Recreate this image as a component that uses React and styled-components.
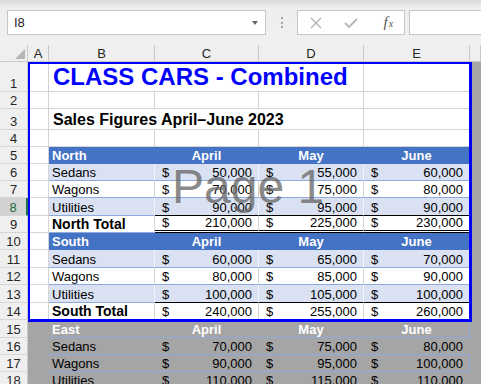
import React from "react";
import styled, { createGlobalStyle } from "styled-components";

const COLS = "28px 21px 106px 104px 105px 106px 1fr";
const GRID = "#d4d4d4";
const TBL = "#8ea9db";
const HEAD = "#4472c4";
const BAND = "#d9e1f2";
const OUT = "#a5a5a5";
const PRINT = "#0000ff";
const HDR = "#efefef";
const HDR_LINE = "#cacaca";

const GlobalStyle = createGlobalStyle`
  *, *::before, *::after { box-sizing: border-box; }
  html, body { margin: 0; padding: 0; background: #f0f0f0; overflow: hidden; }
  body { font-family: "Liberation Sans", Arial, sans-serif; }
`;

const Window = styled.div`
  width: 481px;
  height: 384px;
  overflow: hidden;
  display: flex;
  flex-direction: column;
  background: #f0f0f0;
`;

/* ---------- formula bar ---------- */
const FormulaBar = styled.div`
  flex: none;
  height: 45px;
  display: flex;
  align-items: flex-start;
  padding: 10px 0 0 7px;
  background: linear-gradient(#d9d9d9, #eeeeee 7px, #f0f0f0);
`;

const NameBox = styled.div`
  flex: none;
  width: 259px;
  height: 25px;
  background: #fff;
  border: 1px solid #c6c6c6;
  display: flex;
  align-items: center;
  justify-content: space-between;
  padding: 0 7px 0 6px;
  font-size: 13px;
  color: #222;
`;

const DropArrow = styled.span`
  width: 0;
  height: 0;
  border-left: 3px solid transparent;
  border-right: 3px solid transparent;
  border-top: 4px solid #666;
`;

const Grip = styled.div`
  flex: none;
  width: 31px;
  height: 25px;
  display: flex;
  flex-direction: column;
  align-items: center;
  justify-content: center;
  gap: 2.5px;
`;

const GripDot = styled.i`
  display: block;
  width: 2px;
  height: 2px;
  background: #a6a6a6;
`;

const FxBox = styled.div`
  flex: none;
  width: 108px;
  height: 25px;
  background: #fff;
  border: 1px solid #c6c6c6;
  display: grid;
  grid-template-columns: repeat(3, 1fr);
  align-items: center;
  justify-items: center;
`;

const FxLabel = styled.span`
  font-family: "Liberation Serif", "DejaVu Serif", serif;
  font-style: italic;
  font-size: 15px;
  color: #555;
  line-height: 1;
  padding-left: 4px;
  & > small {
    font-size: 10px;
    margin-left: 1px;
  }
`;

const FormulaInput = styled.div`
  flex: 1;
  margin-left: 4px;
  height: 25px;
  background: #fff;
  border: 1px solid #c6c6c6;
  border-right: none;
`;

/* ---------- column header ---------- */
const HeaderRow = styled.div`
  flex: none;
  display: grid;
  grid-template-columns: ${COLS};
  height: 17px;
`;

const Corner = styled.div`
  background: ${HDR};
  border-right: 1px solid ${HDR_LINE};
  border-bottom: 1px solid ${HDR_LINE};
  display: flex;
  align-items: flex-end;
  justify-content: flex-end;
  padding: 0 2px 2px 0;
`;

const ColHead = styled.div`
  background: ${HDR};
  border-right: 1px solid ${HDR_LINE};
  border-bottom: 1px solid ${HDR_LINE};
  display: flex;
  align-items: center;
  justify-content: center;
  font-size: 13px;
  color: #262626;
`;

/* ---------- sheet ---------- */
const SheetBody = styled.div`
  position: relative;
  flex: 1;
  overflow: hidden;
`;

const Row = styled.div`
  display: grid;
  grid-template-columns: ${COLS};
  height: ${(p) => p.$h}px;
`;

const RowNum = styled.div`
  display: flex;
  align-items: flex-end;
  justify-content: center;
  font-size: 13px;
  line-height: 15px;
  color: ${(p) => (p.$sel ? "#1b6b3c" : "#262626")};
  background: ${(p) => (p.$sel ? "#d2d2d2" : HDR)};
  border-bottom: 1px solid #d6d6d6;
  border-right: ${(p) => (p.$sel ? "2px solid #217346" : `1px solid ${HDR_LINE}`)};
`;

const Cell = styled.div`
  display: flex;
  align-items: flex-end;
  min-width: 0;
  white-space: nowrap;
  padding: 0 0 0 3px;
  font-size: 13px;
  line-height: 14px;
  color: #000;
  background: #fff;
  border-right: 1px solid ${GRID};
  border-bottom: 1px solid ${GRID};
`;

const OutCell = styled(Cell)`
  background: ${OUT};
  border-right-color: ${OUT};
  border-bottom-color: ${OUT};
`;

const TitleCell = styled(Cell)`
  grid-column: span 3;
  padding-left: 4px;
  font-size: 24px;
  line-height: 28px;
  font-weight: 700;
  color: #0000ff;
`;

const SubtitleCell = styled(Cell)`
  grid-column: span 3;
  padding-left: 4px;
  font-size: 16px;
  line-height: 18px;
  font-weight: 700;
`;

const toneBg = { head: HEAD, band: BAND, white: "#fff", total: "#fff", out: OUT };
const toneV = { head: HEAD, band: "#f1f4fa", white: GRID, total: GRID, out: OUT };

const TCell = styled(Cell)`
  background: ${(p) => toneBg[p.$tone]};
  border-right-color: ${(p) => (p.$edge ? TBL : toneV[p.$tone])};
  border-bottom: ${(p) =>
    p.$rule === "double"
      ? "3px double #000"
      : `1px solid ${p.$rule === "black" ? "#000" : p.$tone === "head" ? HEAD : TBL}`};
  color: ${(p) => (p.$light ? "#fff" : "#000")};
  font-weight: ${(p) => (p.$bold ? 700 : 400)};
  font-size: ${(p) => (p.$big ? 14 : 13)}px;
  line-height: ${(p) => (p.$big ? 15 : 14)}px;
  justify-content: ${(p) => (p.$center ? "center" : p.$spread ? "space-between" : "flex-start")};
  padding: ${(p) => (p.$spread ? "0 6px 0 7px" : p.$center ? "0" : "0 0 0 3px")};
`;

const PrintArea = styled.div`
  position: absolute;
  left: 28px;
  top: 0;
  width: 444px;
  height: 260px;
  border-style: solid;
  border-color: ${PRINT};
  border-width: 2px 3px 3px 2px;
  pointer-events: none;
`;

const Watermark = styled.div`
  position: absolute;
  left: 172px;
  top: 101px;
  font-size: 48px;
  line-height: 48px;
  color: rgba(100, 100, 100, 0.75);
  white-space: nowrap;
  pointer-events: none;
`;

/* ---------- data ---------- */
const HEIGHTS = {
  1: 30, 2: 17, 3: 21, 4: 17, 5: 17, 6: 17, 7: 17, 8: 18, 9: 17,
  10: 17, 11: 18, 12: 17, 13: 18, 14: 17, 15: 18, 16: 17, 17: 17, 18: 17,
};
const MONTHS = ["April", "May", "June"];
const SECTIONS = [
  {
    start: 5,
    name: "North",
    items: [
      ["Sedans", 50000, 55000, 60000],
      ["Wagons", 70000, 75000, 80000],
      ["Utilities", 90000, 95000, 90000],
    ],
    total: [210000, 225000, 230000],
  },
  {
    start: 10,
    name: "South",
    items: [
      ["Sedans", 60000, 65000, 70000],
      ["Wagons", 80000, 85000, 90000],
      ["Utilities", 100000, 105000, 100000],
    ],
    total: [240000, 255000, 260000],
    lastTotal: true,
  },
  {
    start: 15,
    name: "East",
    out: true,
    items: [
      ["Sedans", 70000, 75000, 80000],
      ["Wagons", 90000, 95000, 100000],
      ["Utilities", 110000, 115000, 110000],
    ],
  },
];

const fmt = (v) => String(v).replace(/\B(?=(\d{3})+(?!\d))/g, ",");

function SheetRow({ n, out, children }) {
  return (
    <Row $h={HEIGHTS[n]}>
      <RowNum $sel={n === 8}>{n}</RowNum>
      {out ? <OutCell /> : <Cell />}
      {children}
      <OutCell />
    </Row>
  );
}

const Amount = ({ v, ...rest }) => (
  <TCell $spread {...rest}>
    <span>$</span>
    <span>{fmt(v)}</span>
  </TCell>
);

function Section({ start, name, items, total, out, lastTotal }) {
  const headTone = out ? "out" : "head";
  return (
    <>
      <SheetRow n={start} out={out}>
        <TCell $tone={headTone} $light $bold>
          {name}
        </TCell>
        {MONTHS.map((m, i) => (
          <TCell key={m} $tone={headTone} $light $bold $center $edge={out && i === 2}>
            {m}
          </TCell>
        ))}
      </SheetRow>
      {items.map(([label, ...vals], r) => {
        const tone = out ? "out" : r % 2 === 0 ? "band" : "white";
        const rule = !out && total && r === items.length - 1 ? "black" : undefined;
        const edge = out && r % 2 === 1;
        return (
          <SheetRow key={label} n={start + 1 + r} out={out}>
            <TCell $tone={tone}>{label}</TCell>
            {vals.map((v, i) => (
              <Amount key={i} v={v} $tone={tone} $rule={rule} $edge={edge && i === 2} />
            ))}
          </SheetRow>
        );
      })}
      {total && (
        <SheetRow n={start + 4}>
          <TCell $tone="total" $bold $big>
            {name} Total
          </TCell>
          {total.map((v, i) => (
            <Amount key={i} v={v} $tone="total" $rule={lastTotal ? undefined : "double"} />
          ))}
        </SheetRow>
      )}
    </>
  );
}

export default function App() {
  return (
    <>
      <GlobalStyle />
      <Window>
        <FormulaBar>
          <NameBox>
            <span>I8</span>
            <DropArrow />
          </NameBox>
          <Grip>
            <GripDot />
            <GripDot />
            <GripDot />
          </Grip>
          <FxBox>
            <svg width="12" height="12" viewBox="0 0 12 12">
              <path d="M1 1 L11 11 M11 1 L1 11" stroke="#b4b4b4" strokeWidth="1.4" fill="none" />
            </svg>
            <svg width="14" height="10" viewBox="0 0 14 10">
              <path d="M1 5 L5 9 L13 1" stroke="#b4b4b4" strokeWidth="1.8" fill="none" />
            </svg>
            <FxLabel>
              f<small>x</small>
            </FxLabel>
          </FxBox>
          <FormulaInput />
        </FormulaBar>

        <HeaderRow>
          <Corner>
            <svg width="10" height="10" viewBox="0 0 10 10">
              <polygon points="10,0 10,10 0,10" fill="#b6b6b6" />
            </svg>
          </Corner>
          {["A", "B", "C", "D", "E", ""].map((c, i) => (
            <ColHead key={i}>{c}</ColHead>
          ))}
        </HeaderRow>

        <SheetBody>
          <SheetRow n={1}>
            <TitleCell>CLASS CARS - Combined</TitleCell>
            <Cell />
          </SheetRow>
          <SheetRow n={2}>
            <Cell />
            <Cell />
            <Cell />
            <Cell />
          </SheetRow>
          <SheetRow n={3}>
            <SubtitleCell>Sales Figures April–June 2023</SubtitleCell>
            <Cell />
          </SheetRow>
          <SheetRow n={4}>
            <Cell />
            <Cell />
            <Cell />
            <Cell />
          </SheetRow>
          {SECTIONS.map((s) => (
            <Section key={s.name} {...s} />
          ))}
          <PrintArea />
          <Watermark>Page 1</Watermark>
        </SheetBody>
      </Window>
    </>
  );
}
